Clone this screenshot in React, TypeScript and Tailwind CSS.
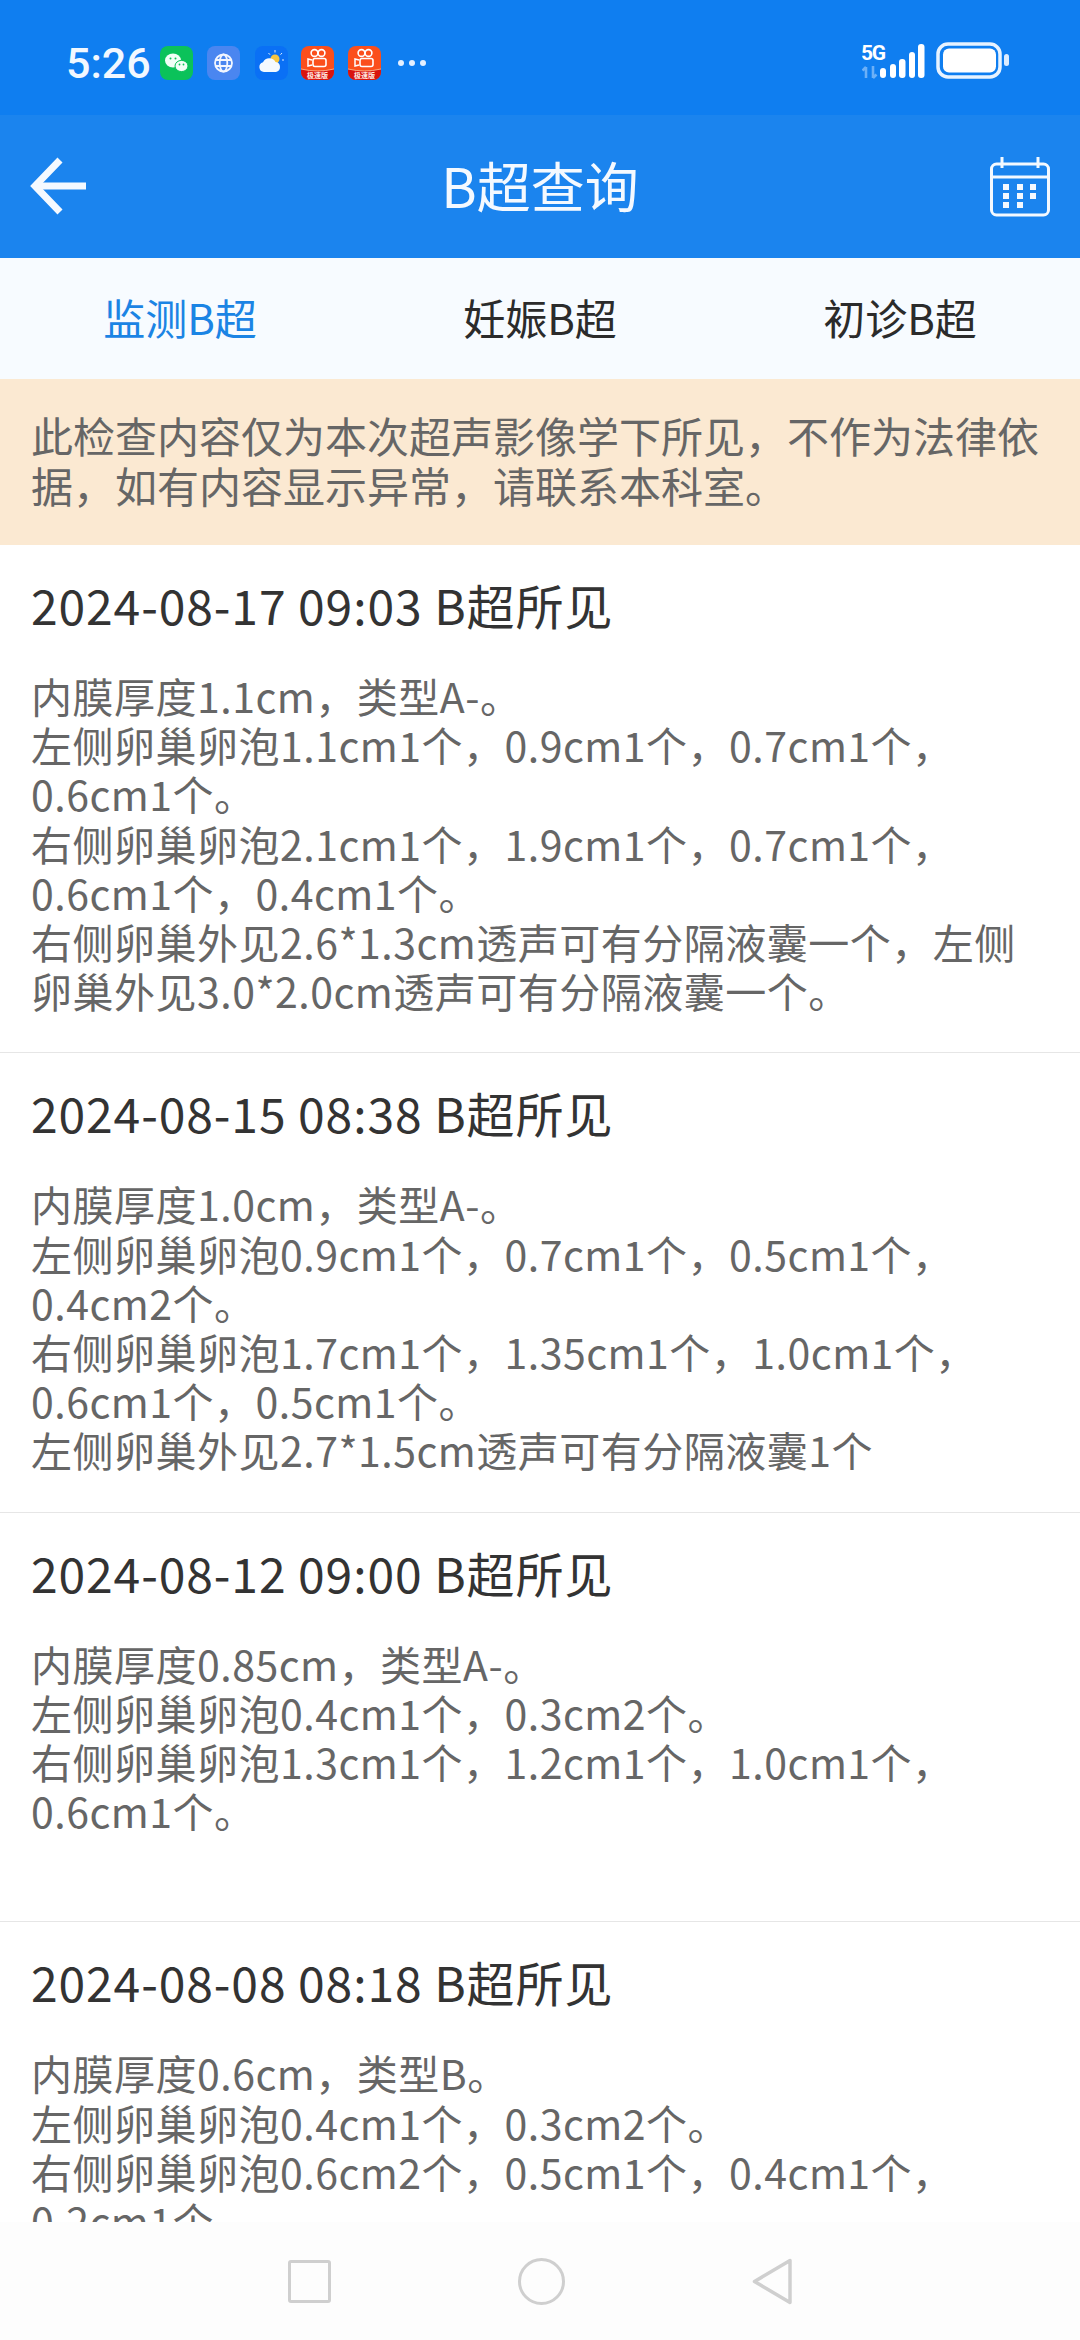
const font = { fontFamily: '"Noto Sans CJK SC", sans-serif' };

function KuaiIcon() {
  return (
    <div className="relative w-[33px] h-[34px] rounded-[8px] overflow-hidden bg-[#fb4f1c]">
      <svg viewBox="0 0 33 34" className="absolute inset-0 w-full h-full">
        <circle cx="13.5" cy="7" r="3.4" fill="none" stroke="#fff" strokeWidth="1.6" />
        <circle cx="20.5" cy="7" r="3.4" fill="none" stroke="#fff" strokeWidth="1.6" />
        <rect x="12" y="12.5" width="13" height="8" rx="2" fill="none" stroke="#fff" strokeWidth="1.6" />
        <path d="M11 14 L7 13 V20 L11 19" fill="none" stroke="#fff" strokeWidth="1.5" />
        <path d="M0 23 Q16.5 27 33 23 V34 H0 Z" fill="#d8140f" />
        <path d="M0 23 Q16.5 27 33 23" fill="none" stroke="#ffc9a0" strokeWidth="0.8" />
      </svg>
      <span className="absolute left-0 right-0 bottom-[1px] text-center text-[7px] leading-[8px] font-bold text-[#ffe9e0]">极速版</span>
    </div>
  );
}

function StatusBar() {
  return (
    <div className="h-[115px] bg-[#0f7ef0] flex items-start justify-between pt-[46px] pl-[66px] pr-[70px]">
      <div className="flex items-center h-[34px]">
        <span className="w-[82px] text-[43px] leading-[34px] font-medium text-[#f2f8ff]" style={{ fontFamily: 'Roboto, sans-serif' }}>5:26</span>
        <div className="ml-[12px] w-[33px] h-[34px] rounded-[8px] bg-[#0bc25a] flex items-center justify-center">
          <svg viewBox="0 0 33 34" className="w-full h-full">
            <ellipse cx="13" cy="14.5" rx="8" ry="7" fill="#f2fff7" />
            <ellipse cx="21.5" cy="20" rx="6.5" ry="5.6" fill="#f2fff7" stroke="#0bc25a" strokeWidth="1" />
            <circle cx="10.5" cy="12.5" r="1" fill="#0bc25a" />
            <circle cx="15.5" cy="12.5" r="1" fill="#0bc25a" />
            <circle cx="19.5" cy="18.5" r="0.9" fill="#0bc25a" />
            <circle cx="23.5" cy="18.5" r="0.9" fill="#0bc25a" />
          </svg>
        </div>
        <div className="ml-[14px] w-[33px] h-[34px] rounded-[8px] bg-[#4a86f0]">
          <svg viewBox="0 0 33 34" className="w-full h-full" fill="none" stroke="#f2f6ff" strokeWidth="1.8">
            <circle cx="16.5" cy="17" r="8.5" />
            <ellipse cx="16.5" cy="17" rx="3.8" ry="8.5" />
            <path d="M8 14 H25 M8 20 H25" />
          </svg>
        </div>
        <div className="ml-[15px] w-[33px] h-[34px] rounded-[8px] bg-[#0a70f5]">
          <svg viewBox="0 0 33 34" className="w-full h-full">
            <circle cx="20" cy="13" r="4.5" fill="#f5c542" />
            <path d="M20 4 V6.5 M27 7 L25.5 8.7 M29 14 H27 M13.5 7 L15 8.7" stroke="#dcecff" strokeWidth="1" />
            <path d="M9 26 A5 5 0 0 1 8 16.2 A7 7 0 0 1 20.5 16 A5 5 0 0 1 25 21 A5 5 0 0 1 21 26 Z" fill="#f4f9ff" />
          </svg>
        </div>
        <div className="ml-[13px]"><KuaiIcon /></div>
        <div className="ml-[14px]"><KuaiIcon /></div>
        <div className="ml-[17px] flex gap-[5px]">
          <div className="w-[6px] h-[6px] rounded-full bg-[#e4f0ff]" />
          <div className="w-[6px] h-[6px] rounded-full bg-[#e4f0ff]" />
          <div className="w-[6px] h-[6px] rounded-full bg-[#e4f0ff]" />
        </div>
      </div>
      <svg viewBox="862 40 148 42" className="w-[148px] h-[42px] -mt-[6px]">
        <text x="861" y="60" fontSize="21" fontWeight="700" fill="#fff" fontFamily="Roboto, sans-serif" textLength="25">5G</text>
        <path d="M866 78 V67 M862.5 70.5 L866 67 M873 66 V78 M873 78 L876.5 74.5" stroke="#6cb0f7" strokeWidth="2.6" fill="none" />
        <rect x="880" y="68" width="6" height="10" rx="3" fill="#fff" />
        <rect x="890" y="64" width="6" height="14" rx="3" fill="#fff" />
        <rect x="899" y="59" width="6.5" height="19" rx="3" fill="#fff" />
        <rect x="909" y="52" width="6" height="26" rx="3" fill="#fff" />
        <rect x="918" y="44" width="6.5" height="34" rx="3" fill="#fff" />
        <rect x="938" y="44" width="62" height="33" rx="10" fill="none" stroke="#e8f3ff" strokeWidth="3.5" />
        <rect x="943" y="48.5" width="53" height="24" rx="6" fill="#fff" />
        <rect x="1004" y="54" width="5" height="12" rx="2.5" fill="#dcecff" />
      </svg>
    </div>
  );
}

function Header() {
  return (
    <div className="relative h-[143px] bg-[#1b84ee] flex items-center justify-between pl-[30px] pr-[30px]">
      <svg viewBox="0 0 58 58" className="w-[58px] h-[58px] -mt-[1px]" fill="none" stroke="#f4f9ff" strokeWidth="7" strokeLinecap="butt">
        <path d="M56 29 H6" />
        <path d="M30 3 L5 29 L30 55" />
      </svg>
      <span className="text-[54px] leading-[70px] text-[#f4f9ff] absolute left-0 right-0 text-center -mt-[4px]">B超查询</span>
      <svg viewBox="0 0 60 60" className="w-[60px] h-[60px]" fill="none" stroke="#f4f9ff" strokeWidth="3">
        <rect x="1.5" y="7" width="57" height="51" rx="5" />
        <path d="M1.5 20 H58.5" />
        <path d="M12 0 V11 M48 0 V11" />
        <g fill="#f4f9ff" stroke="none">
          <rect x="13" y="27" width="6" height="6" />
          <rect x="27" y="27" width="6" height="6" />
          <rect x="40" y="27" width="6" height="6" />
          <rect x="13" y="36" width="6" height="6" />
          <rect x="27" y="36" width="6" height="6" />
          <rect x="40" y="36" width="6" height="6" />
          <rect x="13" y="45" width="6" height="6" />
          <rect x="27" y="45" width="6" height="6" />
        </g>
      </svg>
    </div>
  );
}

function Tabs() {
  return (
    <div className="h-[121px] bg-[#f7fbff] grid grid-cols-3 items-center text-center text-[42px] leading-[60px] text-[#2b2b2b] pb-[3px]">
      <span className="text-[#1b84e4]">监测B超</span>
      <span>妊娠B超</span>
      <span>初诊B超</span>
    </div>
  );
}

const items: { title: string; text: string; blank?: boolean }[] = [
  {
    title: '2024-08-17 09:03 B超所见',
    text: '内膜厚度1.1cm，类型A-。\n左侧卵巢卵泡1.1cm1个，0.9cm1个，0.7cm1个，0.6cm1个。\n右侧卵巢卵泡2.1cm1个，1.9cm1个，0.7cm1个，0.6cm1个，0.4cm1个。\n右侧卵巢外见2.6*1.3cm透声可有分隔液囊一个，左侧卵巢外见3.0*2.0cm透声可有分隔液囊一个。',
  },
  {
    title: '2024-08-15 08:38 B超所见',
    text: '内膜厚度1.0cm，类型A-。\n左侧卵巢卵泡0.9cm1个，0.7cm1个，0.5cm1个，0.4cm2个。\n右侧卵巢卵泡1.7cm1个，1.35cm1个，1.0cm1个，0.6cm1个，0.5cm1个。\n左侧卵巢外见2.7*1.5cm透声可有分隔液囊1个',
  },
  {
    title: '2024-08-12 09:00 B超所见',
    text: '内膜厚度0.85cm，类型A-。\n左侧卵巢卵泡0.4cm1个，0.3cm2个。\n右侧卵巢卵泡1.3cm1个，1.2cm1个，1.0cm1个，0.6cm1个。',
    blank: true,
  },
  {
    title: '2024-08-08 08:18 B超所见',
    text: '内膜厚度0.6cm，类型B。\n左侧卵巢卵泡0.4cm1个，0.3cm2个。\n右侧卵巢卵泡0.6cm2个，0.5cm1个，0.4cm1个，0.2cm1个。',
  },
];

function Item({ title, text, blank }: { title: string; text: string; blank?: boolean }) {
  return (
    <div className="border-b border-[#e6e6e6] px-[31px] pt-[24px] pb-[37px]">
      <div className="text-[48px] leading-[70px] tracking-[0.9px] text-[#333]">{title}</div>
      <div className="mt-[32px] text-[41px] leading-[49.2px] tracking-[0.5px] text-[#666] whitespace-pre-line">{text}</div>
      {blank && <div className="h-[49px]" />}
    </div>
  );
}

function NavBar() {
  return (
    <div className="h-[118px] bg-[#fdfdfd] flex items-start justify-center pt-[35px] gap-[187px]">
      <div className="w-[43px] h-[43px] mt-[3px] border-[3.5px] border-[#cfcfcf] rounded-[3px]" />
      <div className="w-[47px] h-[47px] mt-[1px] border-[3.5px] border-[#cfcfcf] rounded-full" />
      <svg viewBox="0 0 41 47" className="w-[41px] h-[47px] mt-[1px]" fill="none" stroke="#cfcfcf" strokeWidth="3.5" strokeLinejoin="round">
        <path d="M38 2.5 V44.5 L2.5 23.5 Z" />
      </svg>
    </div>
  );
}

export default function App() {
  return (
    <div className="w-[1080px] h-[2340px] bg-white flex flex-col overflow-hidden" style={font}>
      <StatusBar />
      <Header />
      <Tabs />
      <div className="h-[166px] bg-[#fbe9d2] px-[31px] pt-[31px] text-[42px] leading-[50px] text-[#666]">
        此检查内容仅为本次超声影像学下所见，不作为法律依据，如有内容显示异常，请联系本科室。
      </div>
      <div className="flex-1 min-h-0 overflow-hidden">
        {items.map((it) => (
          <Item key={it.title} {...it} />
        ))}
      </div>
      <NavBar />
    </div>
  );
}
